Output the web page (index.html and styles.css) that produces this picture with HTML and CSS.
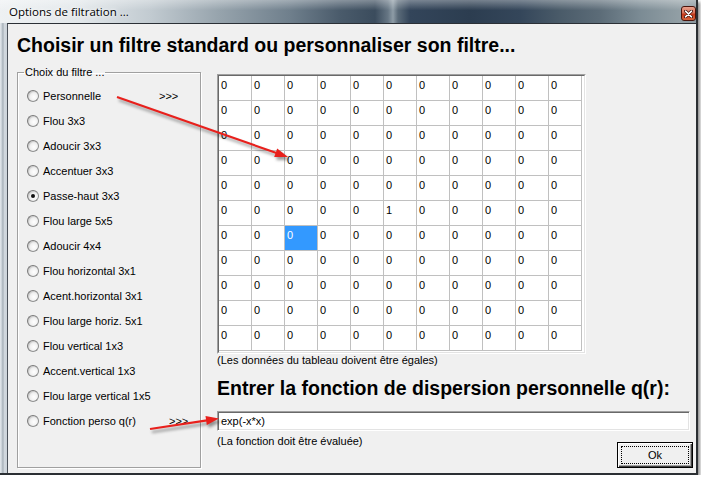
FILE: index.html
```html
<!DOCTYPE html>
<html lang="fr">
<head>
<meta charset="utf-8">
<title>Options de filtration</title>
<link rel="stylesheet" href="styles.css">
</head>
<body>
<div class="window">
  <div class="titlebar">
    <span class="title">Options de filtration ...</span>
    <span class="close"><svg width="9" height="8" viewBox="0 0 9 8"><path d="M1.5 1.2 L7.5 6.8 M7.5 1.2 L1.5 6.8" stroke="#3a0c06" stroke-width="3" stroke-linecap="round"/><path d="M1.5 1.2 L7.5 6.8 M7.5 1.2 L1.5 6.8" stroke="#fff" stroke-width="1.6" stroke-linecap="round"/></svg></span>
  </div>
  <div class="client">
    <h1 class="heading">Choisir un filtre standard ou personnaliser son filtre...</h1>
    <div class="main">
      <fieldset class="group">
        <legend class="legend">Choix du filtre ...</legend>
        <ul class="options">
          <li class="opt"><span class="radio"></span><span class="lbl w1">Personnelle</span><span class="more">&gt;&gt;&gt;</span></li>
          <li class="opt"><span class="radio"></span><span class="lbl">Flou 3x3</span></li>
          <li class="opt"><span class="radio"></span><span class="lbl">Adoucir 3x3</span></li>
          <li class="opt"><span class="radio"></span><span class="lbl">Accentuer 3x3</span></li>
          <li class="opt"><span class="radio checked"></span><span class="lbl">Passe-haut 3x3</span></li>
          <li class="opt"><span class="radio"></span><span class="lbl">Flou large 5x5</span></li>
          <li class="opt"><span class="radio"></span><span class="lbl">Adoucir 4x4</span></li>
          <li class="opt"><span class="radio"></span><span class="lbl">Flou horizontal 3x1</span></li>
          <li class="opt"><span class="radio"></span><span class="lbl">Acent.horizontal 3x1</span></li>
          <li class="opt"><span class="radio"></span><span class="lbl">Flou large horiz. 5x1</span></li>
          <li class="opt"><span class="radio"></span><span class="lbl">Flou vertical 1x3</span></li>
          <li class="opt"><span class="radio"></span><span class="lbl">Accent.vertical 1x3</span></li>
          <li class="opt"><span class="radio"></span><span class="lbl">Flou large vertical 1x5</span></li>
          <li class="opt"><span class="radio"></span><span class="lbl w2">Fonction perso q(r)</span><span class="more">&gt;&gt;&gt;</span></li>
        </ul>
      </fieldset>
      <div class="right">
        <div class="grid-frame">
          <div class="grid">
            <div class="c">0</div><div class="c">0</div><div class="c">0</div><div class="c">0</div><div class="c">0</div><div class="c">0</div><div class="c">0</div><div class="c">0</div><div class="c">0</div><div class="c">0</div><div class="c">0</div>
            <div class="c">0</div><div class="c">0</div><div class="c">0</div><div class="c">0</div><div class="c">0</div><div class="c">0</div><div class="c">0</div><div class="c">0</div><div class="c">0</div><div class="c">0</div><div class="c">0</div>
            <div class="c">0</div><div class="c">0</div><div class="c">0</div><div class="c">0</div><div class="c">0</div><div class="c">0</div><div class="c">0</div><div class="c">0</div><div class="c">0</div><div class="c">0</div><div class="c">0</div>
            <div class="c">0</div><div class="c">0</div><div class="c">0</div><div class="c">0</div><div class="c">0</div><div class="c">0</div><div class="c">0</div><div class="c">0</div><div class="c">0</div><div class="c">0</div><div class="c">0</div>
            <div class="c">0</div><div class="c">0</div><div class="c">0</div><div class="c">0</div><div class="c">0</div><div class="c">0</div><div class="c">0</div><div class="c">0</div><div class="c">0</div><div class="c">0</div><div class="c">0</div>
            <div class="c">0</div><div class="c">0</div><div class="c">0</div><div class="c">0</div><div class="c">0</div><div class="c">1</div><div class="c">0</div><div class="c">0</div><div class="c">0</div><div class="c">0</div><div class="c">0</div>
            <div class="c">0</div><div class="c">0</div><div class="c sel">0</div><div class="c">0</div><div class="c">0</div><div class="c">0</div><div class="c">0</div><div class="c">0</div><div class="c">0</div><div class="c">0</div><div class="c">0</div>
            <div class="c">0</div><div class="c">0</div><div class="c">0</div><div class="c">0</div><div class="c">0</div><div class="c">0</div><div class="c">0</div><div class="c">0</div><div class="c">0</div><div class="c">0</div><div class="c">0</div>
            <div class="c">0</div><div class="c">0</div><div class="c">0</div><div class="c">0</div><div class="c">0</div><div class="c">0</div><div class="c">0</div><div class="c">0</div><div class="c">0</div><div class="c">0</div><div class="c">0</div>
            <div class="c">0</div><div class="c">0</div><div class="c">0</div><div class="c">0</div><div class="c">0</div><div class="c">0</div><div class="c">0</div><div class="c">0</div><div class="c">0</div><div class="c">0</div><div class="c">0</div>
            <div class="c">0</div><div class="c">0</div><div class="c">0</div><div class="c">0</div><div class="c">0</div><div class="c">0</div><div class="c">0</div><div class="c">0</div><div class="c">0</div><div class="c">0</div><div class="c">0</div>
          </div>
        </div>
        <p class="note">(Les données du tableau doivent être égales)</p>
        <h2 class="heading heading2">Entrer la fonction de dispersion personnelle q(r):</h2>
        <div class="input"><span class="input-text">exp(-x*x)</span></div>
        <div class="bottom">
          <p class="note note2">(La fonction doit être évaluée)</p>
          <button class="ok"><span class="focus">Ok</span></button>
        </div>
      </div>
    </div>
  </div>
  <svg class="arrows" width="701" height="480" viewBox="0 0 701 480">
    <line x1="117" y1="97" x2="276.5" y2="153" stroke="#e8201c" stroke-width="2.2"/>
    <polygon points="288,157 277.2,148.4 274.2,157" fill="#e8201c"/>
    <line x1="150" y1="429" x2="207" y2="420.3" stroke="#e8201c" stroke-width="2.2"/>
    <polygon points="219,418.5 205.5,416 206.8,424.9" fill="#e8201c"/>
  </svg>
</div>
</body>
</html>
```

FILE: styles.css
```css
* { box-sizing: border-box; }

body {
  margin: 0;
  background: #fff;
  font-family: "Liberation Sans", Arial, sans-serif;
  font-size: 11px;
  color: #000;
}

.window {
  position: relative;
  width: 698px;
  height: 475px;
  display: flex;
  flex-direction: column;
  border-right: 2px solid #2b2f33;
  border-bottom: 2px solid #2b2f33;
  background: linear-gradient(90deg, #e6eaee 0, #c4ccd3 2px, #9ea8b0 3px, #d2d8de 4px, #cdd4da 7px);
  box-shadow: 2px 2px 3px rgba(0, 0, 0, 0.45);
}

.titlebar {
  height: 23px;
  flex: none;
  display: flex;
  align-items: flex-start;
  background:
    linear-gradient(180deg, rgba(255,255,255,0.35) 0, rgba(255,255,255,0) 45%),
    linear-gradient(90deg, #eef1f3 0, #e2e7ea 80px, #c2cbd1 150px, #96a3ac 220px, #6f7f8c 290px, #4a5b6b 340px, #3b4c5d 375px, #667684 388px, #8e9ca6 393px, #5b6b79 398px, #33455a 410px, #2c3d50 470px, #34465a 520px, #4a5b69 560px, #5c6c78 600px, #7b8b94 640px, #929fa5 680px, #8a979e 697px);
}

.title {
  padding: 5px 0 0 9px;
  font-family: "Open Sans", "Noto Sans", sans-serif;
  font-size: 11.5px;
  line-height: 14px;
  color: #000;
  text-shadow: 0 0 6px #fff, 0 0 3px #fff;
}

.close {
  margin: 6px 0 0 auto;
  width: 15px;
  height: 15px;
  border: 1px solid #4a140c;
  border-radius: 3px;
  background: linear-gradient(180deg, #eaa08c 0, #d8735a 45%, #c33a1c 55%, #d8653c 100%);
  display: flex;
  align-items: center;
  justify-content: center;
}

.client {
  flex: 1;
  margin-left: 7px;
  border-left: 1px solid #4a5058;
  border-top: 1px solid #2b3036;
  background: #f0f0f0;
}

.heading {
  margin: 10px 0 0 9px;
  font-family: "Liberation Sans", Arial, sans-serif;
  font-weight: bold;
  font-size: 19.5px;
  line-height: 22px;
}

.main {
  display: flex;
  gap: 16px;
  margin: 10px 0 0 9px;
}

.group {
  width: 184px;
  margin: 0;
  padding: 0;
  border: 1px solid #a0a0a0;
  box-shadow: inset 1px 1px #fff, 1px 1px #fff;
}

.legend {
  margin-left: 6px;
  padding: 0 1px;
  line-height: 13px;
  font-size: 11px;
}

.options {
  list-style: none;
  margin: 0;
  padding: 4px 0 9px 9px;
}

.opt {
  height: 25px;
  display: flex;
  align-items: center;
}

.radio {
  position: relative;
  width: 12px;
  height: 12px;
  flex: none;
  margin-right: 4px;
  border-radius: 50%;
  border: 1px solid #8e8f8f;
  border-top-color: #7a7a7a;
  border-left-color: #7a7a7a;
  background: radial-gradient(circle at 60% 60%, #ffffff 0, #f2f2f2 40%, #d8d8d8 100%);
  box-shadow: inset 1px 1px 1px rgba(0,0,0,0.12);
}

.radio.checked::after {
  content: "";
  position: absolute;
  left: 3px;
  top: 3px;
  width: 4px;
  height: 4px;
  border-radius: 50%;
  background: #111;
}

.lbl { white-space: nowrap; }
.lbl.w1 { width: 116px; }
.lbl.w2 { width: 126px; }

.right {
  width: 476px;
  padding-top: 8px;
}

.grid-frame {
  width: 369px;
  border: 1px solid;
  border-color: #a0a0a0 #ffffff #ffffff #a0a0a0;
}

.grid {
  display: grid;
  grid-template-columns: repeat(11, 33px);
  grid-auto-rows: 25px;
  padding: 0 2px 1px 0;
  background: #fff;
  border: 1px solid;
  border-color: #696969 #e3e3e3 #e3e3e3 #696969;
}

.c {
  border-right: 1px solid #c0c0c0;
  border-bottom: 1px solid #c0c0c0;
  padding: 3px 0 0 2px;
  line-height: 13px;
}

.c.sel {
  background: #3399ff;
  color: #fff;
}

.note {
  margin: 0;
  line-height: 13px;
}

.heading2 {
  margin: 10px 0 0 0;
}

.input {
  margin-top: 12px;
  width: 473px;
  height: 20px;
  background: #fff;
  border: 1px solid;
  border-color: #a0a0a0 #ffffff #ffffff #a0a0a0;
  box-shadow: inset 1px 1px #696969, inset -1px -1px #e3e3e3;
  padding: 2px 0 0 3px;
  line-height: 14px;
}

.bottom {
  display: flex;
  justify-content: space-between;
  align-items: flex-start;
}

.note2 { margin-top: 4px; }

.ok {
  margin-top: 11px;
  width: 76px;
  height: 26px;
  padding: 3px;
  background: #f0f0f0;
  border: 1px solid #000;
  box-shadow: inset 1px 1px #fff, inset -1px -1px #404040, inset -2px -2px #a0a0a0;
  font-family: "Liberation Sans", Arial, sans-serif;
  font-size: 11px;
  color: #000;
}

.focus {
  display: block;
  height: 100%;
  border: 1px dotted #000;
  line-height: 16px;
  text-align: center;
}

.arrows {
  position: absolute;
  left: 0;
  top: 0;
  overflow: visible;
  pointer-events: none;
  filter: drop-shadow(2px 3px 1.5px rgba(0, 0, 0, 0.4));
}
```
